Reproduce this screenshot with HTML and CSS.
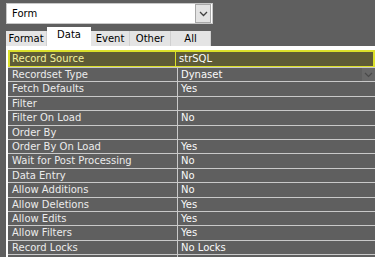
FILE: index.html
```html
<!DOCTYPE html>
<html lang="en">
<head>
    <meta charset="UTF-8">
    <title>Property Sheet - Data</title>
    <link rel="stylesheet" href="styles.css">
</head>
<body>
    <div class="combo">
        <span class="combo-text">Form</span>
        <span class="combo-button">
            <svg width="9" height="6" viewBox="0 0 9 6"><path d="M1 1 L4.5 4.5 L8 1" fill="none" stroke="#404040" stroke-width="1.3"/></svg>
        </span>
    </div>

    <div class="tabs">
        <div class="tab tab-format">Format</div>
        <div class="tab tab-data active">Data</div>
        <div class="tab tab-event">Event</div>
        <div class="tab tab-other">Other</div>
        <div class="tab tab-all">All</div>
    </div>

    <div class="panel">
        <div class="grid">
            <div class="row selected"><div class="label">Record Source</div><div class="value">strSQL</div></div>
            <div class="row"><div class="label">Recordset Type</div><div class="value">Dynaset<span class="drop"><svg width="9" height="6" viewBox="0 0 9 6"><path d="M1 1 L4.5 4.5 L8 1" fill="none" stroke="#4a4a4a" stroke-width="1.2"/></svg></span></div></div>
            <div class="row"><div class="label">Fetch Defaults</div><div class="value">Yes</div></div>
            <div class="row"><div class="label">Filter</div><div class="value"></div></div>
            <div class="row"><div class="label">Filter On Load</div><div class="value">No</div></div>
            <div class="row"><div class="label">Order By</div><div class="value"></div></div>
            <div class="row"><div class="label">Order By On Load</div><div class="value">Yes</div></div>
            <div class="row"><div class="label">Wait for Post Processing</div><div class="value">No</div></div>
            <div class="row"><div class="label">Data Entry</div><div class="value">No</div></div>
            <div class="row"><div class="label">Allow Additions</div><div class="value">No</div></div>
            <div class="row"><div class="label">Allow Deletions</div><div class="value">Yes</div></div>
            <div class="row"><div class="label">Allow Edits</div><div class="value">Yes</div></div>
            <div class="row"><div class="label">Allow Filters</div><div class="value">Yes</div></div>
            <div class="row"><div class="label">Record Locks</div><div class="value">No Locks</div></div>
            <div class="row"><div class="label"></div><div class="value"></div></div>
        </div>
    </div>
</body>
</html>
```

FILE: styles.css
```css
body {
    margin: 0;
    background-color: #5f5f5f;
    font-family: 'DejaVu Sans', Verdana, sans-serif;
    font-size: 10px;
    overflow: hidden;
    height: 257px;
}

/* Object combo box */
.combo {
    display: flex;
    align-items: center;
    justify-content: space-between;
    margin: 3px 0 0 6px;
    width: 207px;
    height: 21px;
    box-sizing: border-box;
    background-color: #fff;
    border: 1px solid #c8c8c8;
}

.combo-text {
    padding-left: 5px;
    color: #000;
}

.combo-button {
    display: flex;
    align-items: center;
    justify-content: center;
    width: 16px;
    height: 19px;
    box-sizing: border-box;
    margin-right: 1px;
    background-color: #e3e3e3;
    border: 1px solid #a8a8a8;
}

/* Tabs */
.tabs {
    display: flex;
    align-items: flex-end;
    margin: 3px 0 0 6px;
    height: 19px;
}

.tab {
    height: 15px;
    box-sizing: border-box;
    background-color: #e4e4e4;
    border-right: 1px solid #d0d0d0;
    color: #000;
    line-height: 16px;
    text-align: center;
}

.tab.active {
    height: 19px;
    line-height: 16px;
    background-color: #fff;
    border-right: none;
}

.tab-format { width: 41px; }
.tab-data { width: 44px; }
.tab-event { width: 39px; }
.tab-other { width: 41px; }
.tab-all { width: 40px; }

/* Property grid */
.panel {
    margin-left: 6px;
    padding: 4px 0 0 2px;
    background-color: #fff;
}

.grid {
    display: flex;
    flex-direction: column;
    gap: 1px;
    background-color: #c9c9c9;
    padding-top: 1px;
}

.row {
    display: flex;
    flex-shrink: 0;
    height: 13.4px;
    background-color: #c9c9c9;
    color: #ececec;
    line-height: 14px;
}

.label {
    width: 165px;
    flex-shrink: 0;
    padding-left: 4px;
    margin-right: 1px;
    background-color: #5f5f5f;
    white-space: nowrap;
    overflow: hidden;
}

.value {
    flex: 1;
    position: relative;
    padding-left: 3px;
    background-color: #5f5f5f;
    color: #fafafa;
}

.row.selected {
    height: 17px;
    box-sizing: border-box;
    background-color: #dbe02a;
    border: 2px solid #dbe02a;
    border-bottom-width: 1px;
    margin-top: -1px;
    line-height: 14px;
}

.row.selected .label {
    width: 163px;
    padding-left: 2px;
    background-color: #5e5b36;
    color: #f1f09c;
}

.row.selected .value {
    background-color: #5e5b36;
}

.drop {
    position: absolute;
    top: 0;
    right: 0;
    width: 13px;
    height: 13px;
    display: flex;
    align-items: center;
    justify-content: center;
    background-color: #686868;
}
```
